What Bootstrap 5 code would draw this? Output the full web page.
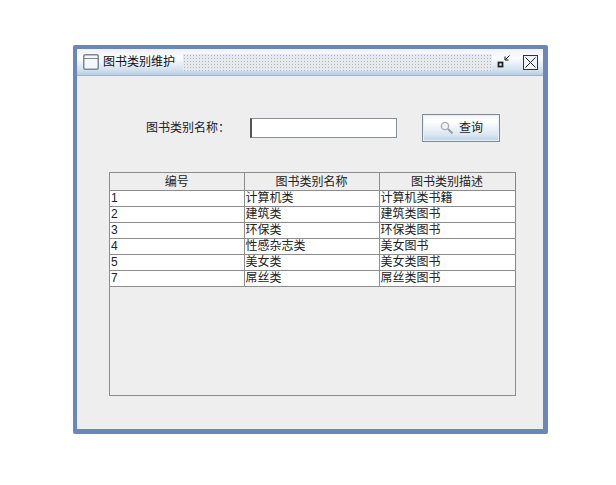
<!DOCTYPE html>
<html lang="zh">
<head>
<meta charset="utf-8">
<title>图书类别维护</title>
<link href="https://cdn.jsdelivr.net/npm/bootstrap@5.3.0/dist/css/bootstrap.min.css" rel="stylesheet">
<style>
html,body{background:#fff;margin:0;height:100%;}
body{font-family:"Liberation Sans","Noto Sans CJK SC",sans-serif;font-size:12px;color:#222;line-height:16px;}
.stage{padding:45px 0 0 73px;}
.jwin{width:475px;height:389px;border:solid #6b86ba;border-width:4px 5px 5px 4px;border-radius:2px;background:#efeeee;display:flex;flex-direction:column;}
.jtitle{height:27px;flex:none;background:linear-gradient(#eef3f9 0%,#fbfcfe 35%,#d3e1ef 80%,#b9cde2 100%);border-bottom:1px solid #9fb3cc;padding-left:6px;}
.jtitle .ttl{margin-left:4px;margin-right:8px;color:#111;flex:none;}
.dots{flex:1;height:17px;background-color:#e6eaef;background-image:radial-gradient(#b0b4ba .6px,transparent .8px);background-size:3px 3px;}
.ctl{flex:none;display:block;}
.jbody{flex:1;padding:38px 26px 34px 32px;display:flex;flex-direction:column;}
.qrow{height:28px;margin-bottom:30px;}
.qlabel{margin-left:37px;width:104px;flex:none;}
.qinput{width:147px;height:20px;border:1px solid #8a8f96;border-left:2px solid #555;background:#fff;flex:none;box-shadow:none;border-radius:0;padding:0 3px;font-size:12px;}
.qbtn{margin-left:25px;width:78px;height:28px;border:1px solid #7f8b98;border-radius:0;background:linear-gradient(#f3f7fb 0%,#fff 25%,#dbe7f2 75%,#bcd0e3 100%);padding:0;font-size:12px;color:#222;box-shadow:inset 0 0 0 1px #e6eef6;}
.tblbox{width:407px;height:224px;border:1px solid #8c8c8c;flex:none;background:#efeeee;}
.dtbl{width:405px;table-layout:fixed;margin:0;border-collapse:collapse;}
.dtbl th,.dtbl td{padding:0 0 0 1px;height:16px;font-weight:400;line-height:15px;border:1px solid #8c8c8c;border-top:0;color:#222;white-space:nowrap;overflow:hidden;}
.dtbl th{height:17px;background:#efeeee;text-align:center;padding:2px 0 0;line-height:13px;}
.dtbl td{background:#fff;}
.dtbl tr>*:first-child{border-left:0;}
.dtbl tr>*:last-child{border-right:1px solid #7d8790;}
</style>
</head>
<body>
<div class="stage">
  <div class="jwin">
    <div class="jtitle d-flex align-items-center">
      <svg class="ctl" width="16" height="16" viewBox="0 0 16 16"><rect x=".75" y=".75" width="14.5" height="14.5" rx="1.5" fill="#f4f7fb" stroke="#7c8794" stroke-width="1.5"/><path d="M1 4.5h14" stroke="#7c8794"/></svg>
      <span class="ttl">图书类别维护</span>
      <div class="dots"></div>
      <svg class="ctl ms-1" width="16" height="18" viewBox="0 0 16 18"><rect x="2.5" y="9.5" width="4" height="4" fill="#fff" stroke="#222" stroke-width="1.8"/><path d="M13.5 2.5 9.5 6.5M9 3.5V7h3.5" fill="none" stroke="#111"/></svg>
      <svg class="ctl" style="margin-left:11px;margin-right:5px" width="15" height="15" viewBox="0 0 15 15"><rect x=".5" y=".5" width="14" height="14" fill="#eef3f8" stroke="#333"/><path d="M2.5 2.5l10 10M12.5 2.5l-10 10" stroke="#222" fill="none"/></svg>
    </div>
    <div class="jbody">
      <div class="qrow d-flex align-items-center">
        <span class="qlabel">图书类别名称：</span>
        <input class="qinput form-control" type="text" aria-label="图书类别名称">
        <button class="qbtn btn d-flex align-items-center justify-content-center" type="button">
          <svg width="16" height="16" viewBox="0 0 16 16"><circle cx="6" cy="6" r="3.6" fill="#f2f4f7" stroke="#a8adb2" stroke-width="1.4"/><path d="M9 9l4.5 4.5" stroke="#9a9ea3" stroke-width="2"/></svg>
          <span class="ms-1">查询</span>
        </button>
      </div>
      <div class="tblbox">
        <table class="dtbl">
          <colgroup><col style="width:134px"><col style="width:135px"><col style="width:136px"></colgroup>
          <thead><tr><th>编号</th><th>图书类别名称</th><th>图书类别描述</th></tr></thead>
          <tbody>
            <tr><td>1</td><td>计算机类</td><td>计算机类书籍</td></tr>
            <tr><td>2</td><td>建筑类</td><td>建筑类图书</td></tr>
            <tr><td>3</td><td>环保类</td><td>环保类图书</td></tr>
            <tr><td>4</td><td>性感杂志类</td><td>美女图书</td></tr>
            <tr><td>5</td><td>美女类</td><td>美女类图书</td></tr>
            <tr><td>7</td><td>屌丝类</td><td>屌丝类图书</td></tr>
          </tbody>
        </table>
      </div>
    </div>
  </div>
</div>
<script src="https://cdn.jsdelivr.net/npm/bootstrap@5.3.0/dist/js/bootstrap.bundle.min.js"></script>
</body>
</html>
